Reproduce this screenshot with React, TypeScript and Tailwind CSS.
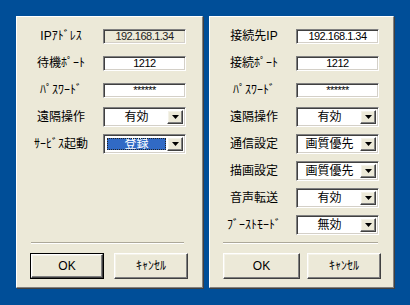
import React from 'react';

type Row =
  | { label: string; kind: 'edit'; value: string; readOnly?: boolean }
  | { label: string; kind: 'combo'; value: string; selected?: boolean };

const leftRows: Row[] = [
  { label: 'IPｱﾄﾞﾚｽ', kind: 'edit', value: '192.168.1.34', readOnly: true },
  { label: '待機ﾎﾟｰﾄ', kind: 'edit', value: '1212' },
  { label: 'ﾊﾟｽﾜｰﾄﾞ', kind: 'edit', value: '******' },
  { label: '遠隔操作', kind: 'combo', value: '有効' },
  { label: 'ｻｰﾋﾞｽ起動', kind: 'combo', value: '登録', selected: true },
];

const rightRows: Row[] = [
  { label: '接続先IP', kind: 'edit', value: '192.168.1.34' },
  { label: '接続ﾎﾟｰﾄ', kind: 'edit', value: '1212' },
  { label: 'ﾊﾟｽﾜｰﾄﾞ', kind: 'edit', value: '******' },
  { label: '遠隔操作', kind: 'combo', value: '有効' },
  { label: '通信設定', kind: 'combo', value: '画質優先' },
  { label: '描画設定', kind: 'combo', value: '画質優先' },
  { label: '音声転送', kind: 'combo', value: '有効' },
  { label: 'ﾌﾞｰｽﾄﾓｰﾄﾞ', kind: 'combo', value: '無効' },
];

const sunken =
  'border border-t-[#808080] border-l-[#808080] border-r-white border-b-white shadow-[inset_1px_1px_0_#404040,inset_-1px_-1px_0_#d4d0c8]';
const raised =
  'border border-t-white border-l-white border-r-[#404040] border-b-[#404040] shadow-[inset_-1px_-1px_0_#808080,inset_1px_1px_0_#f4f2e8]';

const Edit: React.FC<{ value: string; readOnly?: boolean }> = ({ value, readOnly }) => (
  <div
    className={`h-[15px] w-[83px] flex items-center justify-center text-[11px] tracking-[-0.5px] leading-none ${sunken} ${
      readOnly ? 'bg-[#ece9d8] text-[#222]' : 'bg-white text-black'
    }`}
  >
    {value}
  </div>
);

const Combo: React.FC<{ value: string; selected?: boolean }> = ({ value, selected }) => (
  <div className={`h-[20px] w-[83px] flex items-stretch bg-white p-[2px] ${sunken}`}>
    <div className="flex-1 flex items-stretch p-[1px]">
      <div
        className={`flex-1 flex items-center justify-center text-[12px] leading-none ${
          selected ? 'bg-[#316ac5] text-white outline-1 outline-dotted outline-[#222] -outline-offset-1' : 'text-black'
        }`}
      >
        {value}
      </div>
    </div>
    <div className={`w-[16px] flex items-center justify-center bg-[#ece9d8] ${raised}`}>
      <svg width="7" height="4" viewBox="0 0 7 4">
        <path d="M0 0h7L3.5 4z" fill="#000" />
      </svg>
    </div>
  </div>
);

const Button: React.FC<{ label: string; def?: boolean; width: string }> = ({ label, def, width }) => (
  <div className={`h-[26px] ${width} ${def ? 'border border-black' : ''}`}>
    <div className={`h-full w-full flex items-center justify-center bg-[#ece9d8] text-[12px] text-black ${raised}`}>
      {label}
    </div>
  </div>
);

const Panel: React.FC<{ rows: Row[]; width: string; sepClass: string; btnClass: string; okW: string }> = ({
  rows,
  width,
  sepClass,
  btnClass,
  okW,
}) => (
  <div
    className={`${width} h-[272px] flex flex-col bg-[#ece9d8] border border-t-white border-l-white border-r-[#808080] border-b-[#808080] shadow-[1px_1px_0_#404040]`}
  >
    <div className="flex flex-col gap-[7px] pt-[9px] pl-[7px]">
      {rows.map((r) => (
        <div key={r.label} className="h-[20px] flex items-center gap-[5px]">
          <div className="w-[74px] text-center text-[12px] text-black leading-none">{r.label}</div>
          {r.kind === 'edit' ? (
            <Edit value={r.value} readOnly={r.readOnly} />
          ) : (
            <Combo value={r.value} selected={r.selected} />
          )}
        </div>
      ))}
    </div>
    <div className="flex-1" />
    <div className={`h-[2px] border-t border-t-[#aca899] border-b border-b-white ${sepClass}`} />
    <div className={`flex mt-[9px] mb-[8px] ${btnClass}`}>
      <Button label="OK" def={rows.length === 5} width={okW} />
      <Button label="ｷｬﾝｾﾙ" width="w-[74px]" />
    </div>
  </div>
);

export default function App() {
  return (
    <div
      className="w-[410px] h-[305px] bg-[#004e98] flex items-start gap-[6px] pt-[16px] pl-[16px]"
      style={{ fontFamily: '"Liberation Sans", "Noto Sans CJK JP", sans-serif' }}
    >
      <Panel rows={leftRows} width="w-[187px]" sepClass="ml-[14px] mr-[18px]" btnClass="pl-[13px] gap-[10px]" okW="w-[74px]" />
      <Panel rows={rightRows} width="w-[185px]" sepClass="ml-[13px] mr-[15px]" btnClass="pl-[13px] gap-[7px]" okW="w-[77px]" />
    </div>
  );
}
